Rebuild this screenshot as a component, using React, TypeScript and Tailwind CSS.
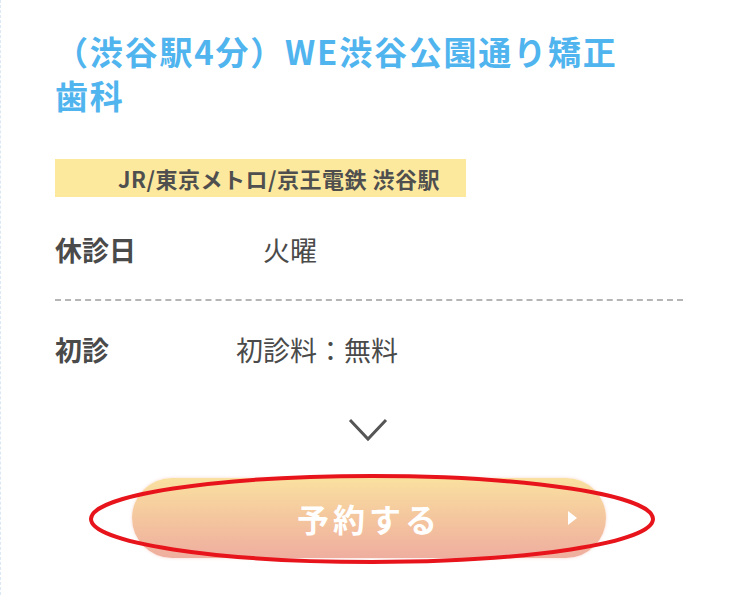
const jp = { fontFamily: '"Noto Sans CJK JP", "Noto Sans", sans-serif' }

function InfoRow({ label, value, valueClass }: { label: string; value: string; valueClass: string }) {
  return (
    <div className="flex items-center h-[62px]">
      <div className="w-[120px] shrink-0 text-[27px] font-bold text-[#4a4a4a]">{label}</div>
      <div className={`text-[27px] text-[#4a4a4a] ${valueClass}`}>{value}</div>
    </div>
  )
}

function App() {
  return (
    <div className="relative min-h-[595px] w-[731px] bg-white overflow-hidden" style={jp}>
      <div className="border-l border-dashed border-[#dde8f5] min-h-[595px] pl-[54px] pr-[48px]">
        <h1 className="pt-[29px] text-[33px] leading-[44px] font-bold text-[#50b4ee] tracking-[1.8px]">
          （渋谷駅4分）WE渋谷公園通り矯正<br />歯科
        </h1>

        <div className="mt-[42px] w-[411px] h-[38px] bg-[#fde99d] flex items-center pl-[63px] text-[22px] font-bold text-[#4f4f4f] tracking-[0.5px]">
          JR/東京メトロ/京王電鉄 渋谷駅
        </div>

        <div className="mt-[22px]">
          <InfoRow label="休診日" value="火曜" valueClass="ml-[88px]" />
          <div className="mt-[18px] border-t-2 border-dashed border-[#b5b5b5]" />
          <div className="mt-[18px]">
            <InfoRow label="初診" value="初診料：無料" valueClass="ml-[61px]" />
          </div>
        </div>

        <div className="mt-[37px] pl-[293px]">
          <svg width="40" height="24" viewBox="0 0 40 24">
            <polyline points="2,2 20,21 38,2" fill="none" stroke="#555" strokeWidth="3" />
          </svg>
        </div>

        <div className="mt-[36px] pl-[77px]">
          <button className="relative w-[474px] h-[80px] rounded-full bg-gradient-to-b from-[#fae1a0] via-[#f4c69e] to-[#efae9f] shadow-[0_0_3px_rgba(240,170,150,0.5)] flex items-center justify-center">
            <span className="text-[32px] font-bold text-white tracking-[4px]">予約する</span>
            <svg className="absolute right-[28px] top-1/2 -translate-y-1/2" width="10" height="14" viewBox="0 0 10 14">
              <path d="M0 0 L9 7 L0 14 Z" fill="#fff" />
            </svg>
          </button>
        </div>
      </div>

      <svg className="absolute left-0 top-0 pointer-events-none" width="731" height="595">
        <ellipse cx="372" cy="519" rx="281" ry="43" fill="none" stroke="#e8141c" strokeWidth="4" />
      </svg>
    </div>
  )
}

export default App
